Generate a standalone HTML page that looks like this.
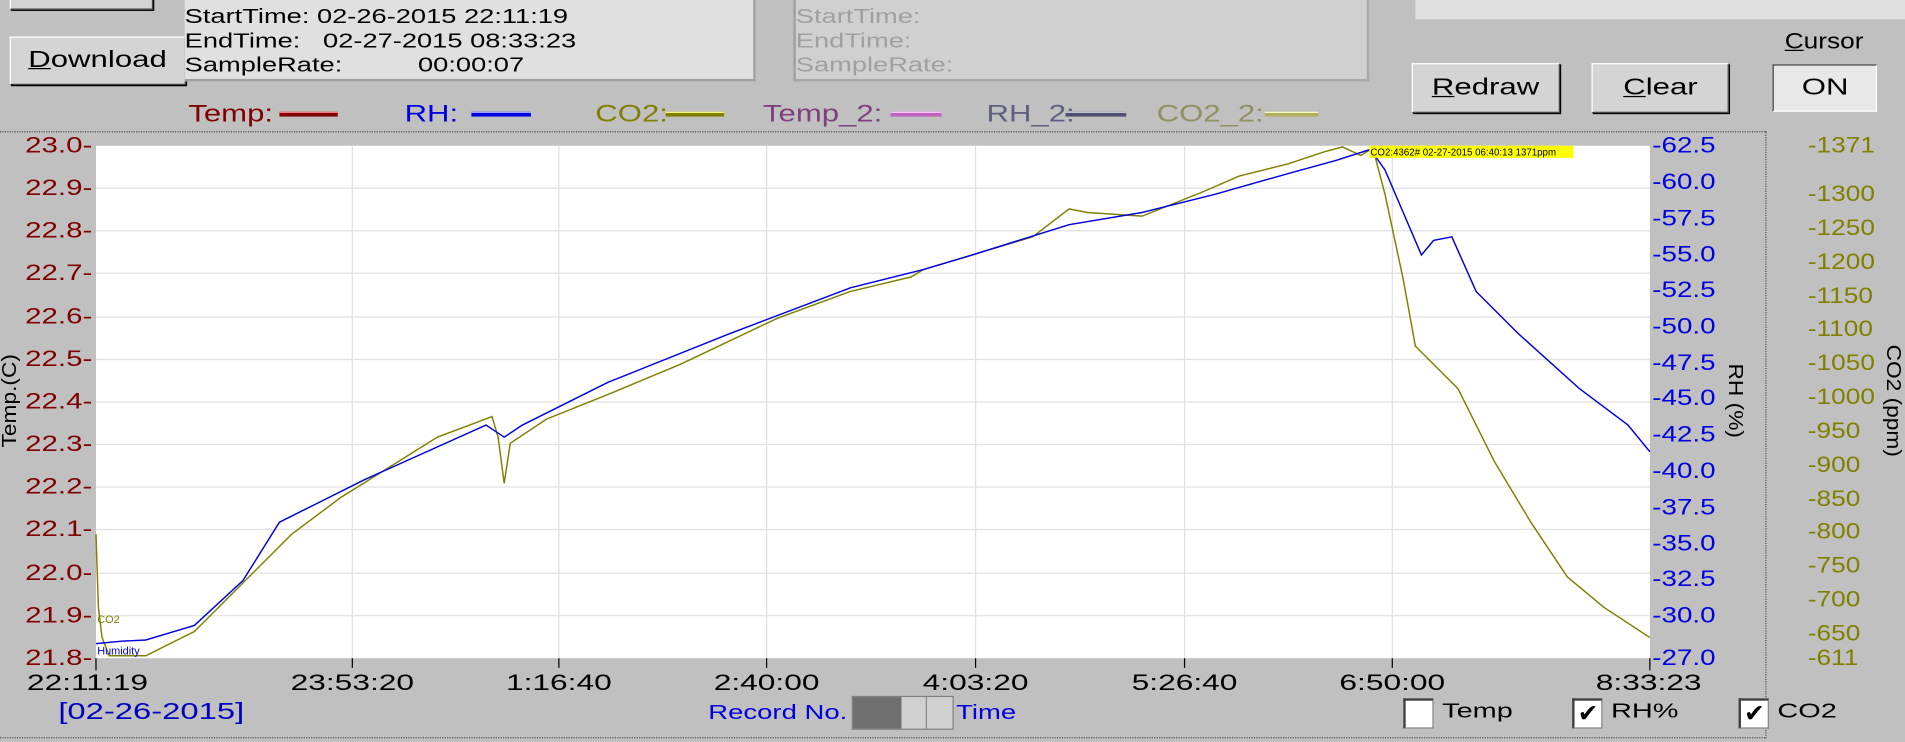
<!DOCTYPE html>
<html><head><meta charset="utf-8"><style>
body{margin:0;width:1905px;height:742px;overflow:hidden;background:#c0c0c0;font-family:"Liberation Sans",Arial,sans-serif}
#w{position:absolute;left:0;top:0;width:1568px;height:611px;transform-origin:0 0;transform:scale(1.21492,1.2144)}
.a{position:absolute;white-space:nowrap}
.s{display:inline-block;transform:scaleX(1.35);transform-origin:left center}
.sc{display:inline-block;transform:scaleX(1.35);transform-origin:center center}
.btn{position:absolute;background:#d4d4d4;border:1px solid;border-color:#fff #404040 #404040 #fff;box-shadow:1px 1px 0 #000;font-size:19px;text-align:center;color:#000}
.l{font-size:18px;color:#800000;position:absolute;right:1492px;transform:translateY(-50%) scaleX(1.35);transform-origin:right center}
.r{font-size:18px;color:#0000e0;position:absolute;left:1360px;transform:translateY(-50%) scaleX(1.27);transform-origin:left center}
.c{font-size:18px;color:#808000;position:absolute;left:1488px;transform:translateY(-50%) scaleX(1.2);transform-origin:left center}
.x{font-size:18px;position:absolute;top:552px;transform:translateX(-50%) scaleX(1.45)}
.cb{position:absolute;top:575px;width:22px;height:22px;background:#fff;border:1px solid #808080;border-top:2px solid #404040;border-left:2px solid #404040;font-size:20px;line-height:22px;text-align:center}
.lg{font-size:20px;top:83px;transform:scaleX(1.28);transform-origin:left center}
.ln{position:absolute;top:92px;height:3px}
</style></head><body><div id="w">
<div class="btn" style="left:8px;top:-6px;width:116px;height:12px"></div>
<div class="btn" style="left:8px;top:30px;width:143px;height:38px;line-height:38px"><span class="sc"><u>D</u>ownload</span></div>
<div class="a" style="left:152px;top:0;width:470px;height:67px;background:#e0e0e0;border-right:2px solid #a0a0a0;border-bottom:2px solid #a0a0a0;font-size:17px;line-height:20px;padding-top:4px;box-sizing:border-box"><div class="s" style="transform:scaleX(1.32)">StartTime: 02-26-2015 22:11:19<br>EndTime:&nbsp;&nbsp; 02-27-2015 08:33:23<br>SampleRate:&nbsp;&nbsp;&nbsp;&nbsp;&nbsp;&nbsp;&nbsp;&nbsp;&nbsp; 00:00:07</div></div>
<div class="a" style="left:653px;top:0;width:474px;height:67px;background:#d0d0d0;border-left:2px solid #a0a0a0;border-right:2px solid #a8a8a8;border-bottom:2px solid #a8a8a8;font-size:17px;line-height:20px;padding-top:4px;color:#a0a0a0;box-sizing:border-box"><div class="s" style="transform:scaleX(1.32)">StartTime:<br>EndTime:<br>SampleRate:</div></div>
<div class="a" style="left:1165px;top:0;width:403px;height:16px;background:#e0e0e0"></div>
<div class="a" style="left:1469px;top:24px;font-size:18px"><span class="s" style="transform:scaleX(1.2)"><u>C</u>ursor</span></div>
<div class="btn" style="left:1162px;top:52px;width:120px;height:39px;line-height:39px"><span class="sc"><u>R</u>edraw</span></div>
<div class="btn" style="left:1310px;top:52px;width:111px;height:39px;line-height:39px"><span class="sc"><u>C</u>lear</span></div>
<div class="a" style="left:1459px;top:53px;width:84px;height:37px;background:#e8e8e8;border:1px solid;border-color:#404040 #fff #fff #404040;font-size:19px;text-align:center;line-height:37px"><span class="sc">ON</span></div>
<!-- legend -->
<div class="a lg" style="left:155px;color:#800000">Temp:</div><div class="ln" style="left:230px;width:48px;background:#800000;border-top:1px solid #f88"></div>
<div class="a lg" style="left:333px;color:#0000e0">RH:</div><div class="ln" style="left:388px;width:49px;background:#0000e0;border-top:1px solid #aaf"></div>
<div class="a lg" style="left:490px;color:#808000">CO2:</div><div class="ln" style="left:548px;width:48px;background:#808000;border-top:1px solid #ff8"></div>
<div class="a lg" style="left:628px;color:#804080">Temp_2:</div><div class="ln" style="left:733px;width:42px;background:#c060c0;border-top:1px solid #fcf"></div>
<div class="a lg" style="left:812px;color:#606080">RH_2:</div><div class="ln" style="left:877px;width:50px;background:#505070;border-top:1px solid #ccd"></div>
<div class="a lg" style="left:952px;color:#909060">CO2_2:</div><div class="ln" style="left:1041px;width:44px;background:#b0b060;border-top:1px solid #ffc"></div>
<div class="a" style="left:0;top:108px;width:1453px;border-top:1px dotted #555"></div>
<div class="a" style="left:1453px;top:108px;height:500px;border-left:1px dotted #555"></div>
<div class="a" style="left:0;top:607px;width:1453px;border-top:1px dotted #555"></div>
<!-- plot -->
<svg class="a" style="left:0;top:0" width="1568" height="611">
<rect x="79" y="120" width="1279" height="422" fill="#fff"/>
<g stroke="#e0e0e0" stroke-width="1">
<path d="M290 120V542M460 120V542M631 120V542M803 120V542M975 120V542M1146 120V542"/>
<path d="M79 155H1358M79 190H1358M79 225H1358M79 261H1358M79 296H1358M79 331H1358M79 366H1358M79 401H1358M79 436H1358M79 472H1358M79 507H1358"/>
</g>
<g stroke="#000"><path d="M79 542V552M290 542V550M460 542V550M631 542V550M803 542V550M975 542V550M1146 542V550M1358 542V552"/></g>
<polyline fill="none" stroke="#808000" stroke-width="1.2" points="79,440 81,500 84,525 90,540 120,540 160,520 200,480 240,440 280,410 320,385 360,360 405,343 410,360 415,398 420,365 450,345 500,325 560,300 640,262 700,240 750,228 760,222 800,210 850,195 880,172 895,175 940,178 990,158 1020,145 1060,135 1090,125 1105,121 1120,128 1130,122 1140,160 1155,230 1165,285 1175,295 1200,320 1230,380 1260,430 1290,475 1320,500 1358,525"/>
<polyline fill="none" stroke="#0000e0" stroke-width="1.2" points="79,530 100,528 120,527 160,515 200,478 230,430 260,415 300,395 400,350 415,360 430,350 500,315 600,275 700,237 760,222 800,210 880,185 940,175 1000,160 1060,143 1100,132 1128,123 1140,140 1155,175 1170,210 1180,198 1195,195 1215,240 1250,275 1300,320 1340,350 1358,372"/>
<rect x="1127" y="120" width="168" height="10" fill="#ffff00"/>
<text x="1128" y="128" font-size="8" font-family="Liberation Sans" fill="#000">CO2:4362# 02-27-2015 06:40:13 1371ppm</text>
<text x="80" y="513" font-size="9" fill="#808000" font-family="Liberation Sans">CO2</text>
<text x="80" y="539" font-size="9" fill="#0000e0" font-family="Liberation Sans">Humidity</text>
</svg>
<div class="l" style="top:120px">23.0-</div><div class="l" style="top:155px">22.9-</div><div class="l" style="top:190px">22.8-</div><div class="l" style="top:225px">22.7-</div><div class="l" style="top:261px">22.6-</div><div class="l" style="top:296px">22.5-</div><div class="l" style="top:331px">22.4-</div><div class="l" style="top:366px">22.3-</div><div class="l" style="top:401px">22.2-</div><div class="l" style="top:436px">22.1-</div><div class="l" style="top:472px">22.0-</div><div class="l" style="top:507px">21.9-</div><div class="l" style="top:542px">21.8-</div>
<div class="r" style="top:120px">-62.5</div><div class="r" style="top:150px">-60.0</div><div class="r" style="top:180px">-57.5</div><div class="r" style="top:210px">-55.0</div><div class="r" style="top:239px">-52.5</div><div class="r" style="top:269px">-50.0</div><div class="r" style="top:299px">-47.5</div><div class="r" style="top:328px">-45.0</div><div class="r" style="top:358px">-42.5</div><div class="r" style="top:388px">-40.0</div><div class="r" style="top:418px">-37.5</div><div class="r" style="top:448px">-35.0</div><div class="r" style="top:477px">-32.5</div><div class="r" style="top:507px">-30.0</div><div class="r" style="top:542px">-27.0</div>
<div class="c" style="top:120px">-1371</div><div class="c" style="top:160px">-1300</div><div class="c" style="top:188px">-1250</div><div class="c" style="top:216px">-1200</div><div class="c" style="top:244px">-1150</div><div class="c" style="top:271px">-1100</div><div class="c" style="top:299px">-1050</div><div class="c" style="top:327px">-1000</div><div class="c" style="top:355px">-950</div><div class="c" style="top:383px">-900</div><div class="c" style="top:411px">-850</div><div class="c" style="top:438px">-800</div><div class="c" style="top:466px">-750</div><div class="c" style="top:494px">-700</div><div class="c" style="top:522px">-650</div><div class="c" style="top:542px">-611</div>
<div class="a" style="left:8px;top:330px;font-size:17px;transform:translate(-50%,-50%) rotate(-90deg) scaleX(1.1)">Temp.(C)</div>
<div class="a" style="left:1428px;top:330px;font-size:17px;transform:translate(-50%,-50%) rotate(90deg) scaleX(1.1)">RH (%)</div>
<div class="a" style="left:1558px;top:330px;font-size:17px;transform:translate(-50%,-50%) rotate(90deg) scaleX(1.1)">CO2 (ppm)</div>
<div class="x" style="left:72px">22:11:19</div><div class="x" style="left:290px">23:53:20</div><div class="x" style="left:460px">1:16:40</div><div class="x" style="left:631px">2:40:00</div><div class="x" style="left:803px">4:03:20</div><div class="x" style="left:975px">5:26:40</div><div class="x" style="left:1146px">6:50:00</div><div class="x" style="left:1357px">8:33:23</div>
<div class="a" style="left:48px;top:576px;font-size:19px;color:#0000c0"><span class="s" style="transform:scaleX(1.42)">[02-26-2015]</span></div>
<div class="a" style="left:583px;top:577px;font-size:17px;color:#0000e0"><span class="s" style="transform:scaleX(1.33)">Record No.</span></div>
<div class="a" style="left:701px;top:573px;width:82px;height:26px;background:#d0d0d0;border:1px solid #808080"><div style="position:absolute;left:0;top:0;width:40px;height:26px;background:#707070"></div><div style="position:absolute;left:60px;top:0;width:1px;height:26px;background:#888"></div></div>
<div class="a" style="left:787px;top:577px;font-size:17px;color:#0000e0"><span class="s" style="transform:scaleX(1.33)">Time</span></div>
<div class="cb" style="left:1155px"></div><div class="a" style="left:1187px;top:576px;font-size:17px"><span class="s" style="transform:scaleX(1.4)">Temp</span></div>
<div class="cb" style="left:1294px">✔</div><div class="a" style="left:1326px;top:576px;font-size:17px"><span class="s" style="transform:scaleX(1.4)">RH%</span></div>
<div class="cb" style="left:1431px">✔</div><div class="a" style="left:1463px;top:576px;font-size:17px"><span class="s" style="transform:scaleX(1.4)">CO2</span></div>
</div></body></html>
